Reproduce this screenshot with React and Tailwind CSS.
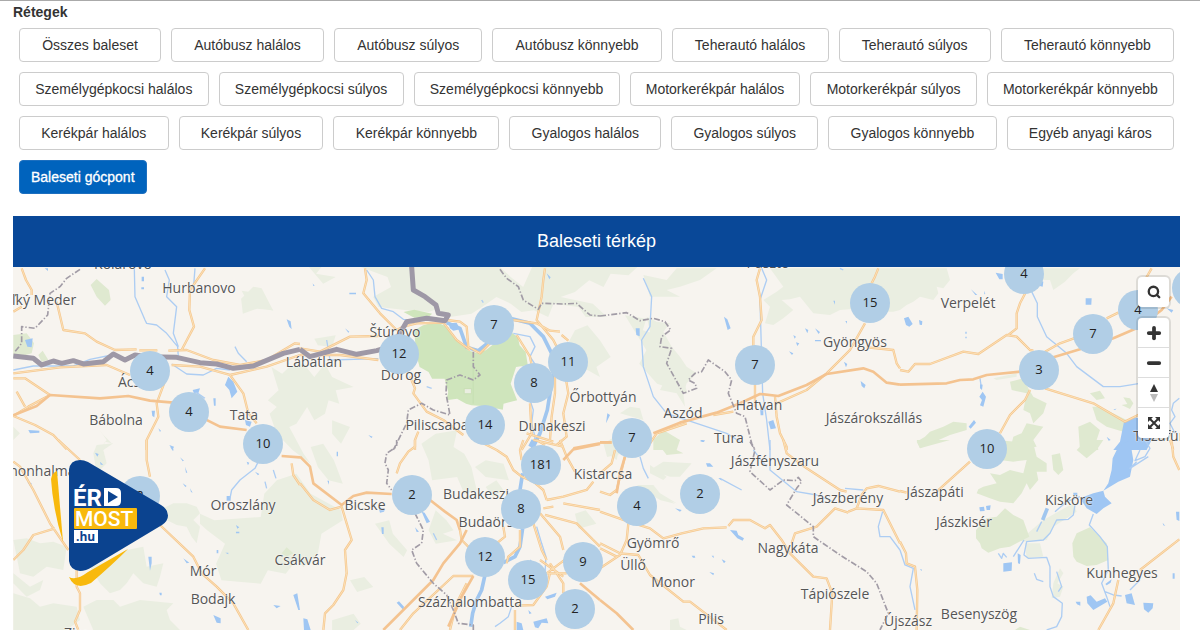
import { Minus, Plus, Search } from 'lucide-react';
import { useState } from 'react';

const layerRows = [
  ['Összes baleset', 'Autóbusz halálos', 'Autóbusz súlyos', 'Autóbusz könnyebb', 'Teherautó halálos', 'Teherautó súlyos', 'Teherautó könnyebb'],
  ['Személygépkocsi halálos', 'Személygépkocsi súlyos', 'Személygépkocsi könnyebb', 'Motorkerékpár halálos', 'Motorkerékpár súlyos', 'Motorkerékpár könnyebb'],
  ['Kerékpár halálos', 'Kerékpár súlyos', 'Kerékpár könnyebb', 'Gyalogos halálos', 'Gyalogos súlyos', 'Gyalogos könnyebb', 'Egyéb anyagi káros'],
];

// label, centre x, centre y on the map
const towns = [
  ['Kolárovo', 110, -3],
  ['Veľký Meder', 23, 33],
  ['Hurbanovo', 186, 21],
  ['Lábatlan', 301, 95],
  ['Štúrovo', 382, 65],
  ['Dorog', 388, 108],
  ['Ács', 116, 115],
  ['Bábolna', 103, 153],
  ['Tata', 231, 148],
  ['Piliscsaba', 424, 158],
  ['Dunakeszi', 539, 159],
  ['Őrbottyán', 590, 130],
  ['Aszód', 670, 146],
  ['Hatvan', 746, 138],
  ['Tura', 716, 171],
  ['Pásztó', 755, -4],
  ['Gyöngyös', 842, 75],
  ['Verpelét', 955, 36],
  ['Jászárokszállás', 861, 151],
  ['Jászfényszaru', 762, 194],
  ['Tiszafüred', 1154, 169],
  ['Kistarcsa', 590, 207],
  ['Pannonhalma', 17, 204],
  ['Oroszlány', 230, 238],
  ['Bicske', 352, 238],
  ['Budakeszi', 463, 227],
  ['Budaörs', 473, 255],
  ['Jászberény', 835, 231],
  ['Jászapáti', 922, 225],
  ['Jászkisér', 951, 255],
  ['Kisköre', 1056, 233],
  ['Csákvár', 287, 293],
  ['Mór', 190, 304],
  ['Bodajk', 200, 332],
  ['Zirc', 63, 366],
  ['Százhalombatta', 457, 335],
  ['Gyömrő', 640, 276],
  ['Üllő', 620, 298],
  ['Monor', 660, 315],
  ['Pilis', 698, 352],
  ['Nagykáta', 775, 281],
  ['Tápiószele', 822, 327],
  ['Újszász', 895, 354],
  ['Besenyszög', 966, 347],
  ['Kunhegyes', 1109, 306],
];

const clusters = [
  [4, 136, 103], [4, 175, 144], [10, 249, 176], [12, 385, 86], [7, 480, 57],
  [11, 554, 94], [8, 520, 115], [14, 471, 157], [181, 527, 197], [7, 618, 170],
  [7, 741, 97], [15, 856, 35], [4, 1010, 6], [3, 1025, 102], [7, 1079, 66],
  [4, 1124, 42], [6, 1178, 20], [10, 973, 181], [2, 126, 228], [2, 398, 227],
  [8, 507, 241], [4, 623, 238], [2, 686, 226], [12, 471, 289], [15, 514, 312],
  [9, 569, 294], [2, 561, 341],
];

// every tile is drawn at three times its size
const tiles = [
  {
    x: 0, y: 260,
    wood: 'M725 92L745 95L760 80L785 85L820 152L770 140L728 155L740 120ZM295 505L310 525L335 550L315 545L300 570L320 540ZM40 500L40 540L60 520Z',
    green: 'M272 75L290 57L310 75L327 90L332 120L315 137L290 110ZM40 225L80 220L102 250L95 280L60 290L40 290ZM115 285L128 272L145 300L125 305Z',
    lake: 'M675 375L685 350L700 365L712 395L695 415L688 390ZM578 390L600 385L595 400L582 400ZM735 480L755 485L750 500L738 495ZM455 452L465 452L463 472L457 468ZM85 510L118 512L118 518L90 520ZM425 50h7v14h-7ZM424 82h8v6h-8ZM640 415h7v22h-5ZM860 178L872 184L875 208L868 200ZM75 240L98 235L95 262L82 260ZM475 505L483 512L480 516ZM508 555L522 560L518 570ZM134 25h10v8Z',
    river: 'M403 25L405 110L435 180L440 190L470 195L500 220L533 260L535 290M495 30L508 60L500 110L530 140L520 220L535 260M585 25L580 90M40 330L100 318L220 318L270 298L335 285M515 312L560 342L610 345L650 325L690 330M705 260L715 280L740 305M555 410L590 398L615 415',
    danube: '',
    road: 'M65 25L78 60L95 90L95 105M40 155L65 140M170 125L190 210L255 220L290 245L345 270L410 268M418 271H472M615 25L570 90L568 150L582 200L545 270M505 272L560 270L640 300L720 315L800 300L885 250L900 252M40 340L180 322L320 315L390 345M515 315L600 320L690 345L800 320L900 285M690 345L730 400L745 460L770 490M40 355L75 355L150 405L85 440L40 468L105 495L160 525L200 568M50 395L75 440M500 350L470 430L475 470L440 540L440 570',
    highway: 'M40 466L110 438L150 405L300 415L385 408L450 422L520 428L600 470L660 500L740 510',
    border: 'M40 288L100 295L125 315L160 303L185 310L220 302L250 312L310 305L340 282L375 300L405 285L440 290L530 292L600 308L650 312L700 325L760 318L850 280L900 268',
    county: 'M240 28L200 55L180 80L150 100L143 165L105 205L65 200L65 250L45 275',
  },
  {
    x: 300, y: 260,
    wood: '',
    green: '',
    lake: 'M445 190L470 188L480 208L460 212L450 205ZM148 98h20v5h-20ZM135 205L148 215L145 218ZM205 525L218 530L214 534ZM38 70L44 78L40 78ZM740 40L752 52L748 58Z',
    river: 'M200 30L220 60L225 110L245 145L280 155L310 178L340 180M640 220L690 230L705 260L690 290L710 320M690 420L700 450L695 490L705 530L700 570M545 120L550 128M380 380L395 385M80 240L90 300L235 296',
    danube: 'M440 188L480 205L500 262L535 272L575 240M630 175L690 190L730 230L755 280L762 330L750 400L742 450L720 520L695 570',
    road: 'M195 25L200 60L190 100L240 160L290 210L310 200L350 190L430 188L470 240L510 270M440 180L480 185L500 200L505 260L540 280L575 245M735 25L730 60L725 110L710 180L760 240L790 300L800 370L805 400L790 460L800 530L770 555M640 180L710 190L750 212L780 215M785 225L805 242M650 225L690 290L700 340M690 430L695 520L665 570M765 340L765 400L755 470L750 540M0 265L60 275L150 230L235 228M0 285L120 285L235 300M330 350L345 385L340 400L380 455L430 480L490 525M355 515L345 540L345 570M550 550L590 570M680 520L760 545M700 540L790 560',
    highway: 'M820 565L900 550',
    border: 'M335 20L340 90L375 110L408 135L415 160L445 165L435 182L380 175L320 185L300 220L270 260L230 272L170 283L110 268L30 290L0 268',
    county: 'M600 28L620 55L655 80L670 120L715 148L725 130L790 132L830 130L870 165L900 168M520 275L520 320L540 345L520 360L480 345L440 360L438 400L450 465L400 450L365 430L325 450L320 490L290 550L280 570',
  },
  {
    x: 600, y: 260,
    wood: 'M130 45L200 60L230 25H350L300 60L240 80L200 90L240 110L150 110ZM510 25H900V150L880 155L850 155L825 140L800 130L785 145L720 150L690 165L640 160L600 110L570 118L545 120L580 150L550 175L520 195L495 190L510 140L490 120L530 95L550 80ZM140 170L170 185L210 190L190 215L215 260L240 290L260 320L290 340L260 370L250 400L255 440L230 400L180 390L195 360L200 330L150 310L170 250L130 240L150 215ZM60 460L90 440L120 445L130 480Z',
    green: 'M160 540L190 510L240 540L200 570H160Z',
    lake: 'M372 170L382 178L392 205L383 210ZM107 205h12v24l-10 -4ZM505 485L520 480L528 505L512 508ZM480 440h10v26h-8ZM782 363L797 375L793 385L785 378ZM615 205L625 210L622 220ZM645 205L660 216L656 222ZM645 240h18v4h-18ZM580 225L588 230L584 236ZM588 247L598 250L592 258ZM567 274L580 280L576 285ZM732 305L742 312L738 322ZM736 183h5v8ZM700 122h5v12ZM300 545L315 540L312 546ZM22 460L30 465L18 490Z',
    river: 'M130 55L155 110L150 200L125 240L130 320L160 410L200 460L290 490L380 520L420 545M485 25L500 60L480 120L488 400L500 480L510 570M720 25L730 30',
    danube: '',
    road: 'M480 25L470 60L480 110L485 180L460 230V260M465 370V440M835 25L825 50L815 70M795 190L750 270L680 340L620 390L530 430M800 262L880 270L890 310L900 325M525 410L530 470L540 520L560 560V570M0 548H35M150 550L170 520L260 490M340 465L400 455',
    highway: 'M0 547L35 547M160 520L240 488L350 458L420 430L480 402L535 408L620 375L680 342L790 325L820 335L860 368L900 374',
    border: '',
    county: 'M0 168L80 158L120 182L160 175L195 185L212 210L185 230L180 260L215 265L200 310L250 400L290 385L285 370L265 360L285 340L305 335L325 300L375 335L395 360L385 400L410 460L435 470L455 550L465 570',
  },
  {
    x: 900, y: 260,
    wood: 'M0 25H140L150 60L130 85L110 80L115 100L100 120L60 110L40 125L20 135L0 150ZM430 25H540L520 40L495 65L460 90L450 60L430 60ZM280 355L350 340L350 350L290 360Z',
    green: 'M330 365L370 355L385 385L400 410L440 430L430 460L400 490L390 460L370 450L380 400L335 390ZM50 545L75 530L90 515L130 500L160 485L200 490L200 510L150 525L60 565ZM570 400L600 392L615 415L590 420ZM577 440L600 440L680 480L670 515L620 500L590 480ZM670 412L690 415L700 430L690 447L665 435L682 432ZM535 500L570 485L600 510L590 540L595 570H540ZM340 530L365 520L380 490L430 500L400 540L410 560L330 570Z',
    lake: 'M557 115L575 115L574 134L557 134ZM287 38L308 42L308 58L298 58ZM12 175L25 170L38 192L28 200L18 195ZM57 180L67 184L66 195L59 194ZM213 88L232 105L226 105ZM252 92L256 102L253 103ZM196 215h4v6h-4ZM196 230h4v5h-4ZM240 372L248 374L246 390L240 385ZM238 410L248 395L258 410L250 440L240 436L246 420ZM672 485L700 470L725 478L735 520L760 530L740 570H640L660 545ZM206 500L222 480L228 488L212 506ZM640 448L650 446L645 450ZM418 60L430 65L428 80L420 78ZM620 530L632 540L626 542ZM800 145L820 150L815 158Z',
    river: 'M395 95L412 130L412 170L440 230L500 280L530 320L570 350L610 380L660 380L720 370M838 415L820 430L815 450L825 470L810 490L825 520M240 355L243 375',
    danube: '',
    road: 'M378 95L360 130L350 160L350 205L325 225M0 330L25 335L45 312L90 312L190 275L235 282L320 225L350 230L390 270L400 272M435 275L480 250L530 232M620 175L655 158M755 25L735 60M390 390L375 420L330 465L300 520M435 385L580 430L675 485L725 460M810 540L820 570',
    highway: 'M0 374L140 370L180 360L220 358L260 345L360 335M460 292L540 268L640 235L720 200L785 150L815 110',
    border: '',
    county: '',
  },
  {
    x: 0, y: 440,
    wood: 'M290 15L340 10L310 30L320 70L290 100L280 40ZM480 210L520 190L560 190L590 200L600 220L580 240L600 260L590 310L575 290L560 260L530 255L500 240ZM40 300L80 295L120 310L160 305L200 320L190 390L140 380L100 410L60 400ZM270 380L340 360L380 330L430 320L440 380L490 370L480 410L470 440L430 430L400 400L380 430L360 450L330 460L300 430ZM40 460L90 475L120 500L160 490L230 500L240 540L200 570H40ZM250 500L290 480L340 480L360 500L420 480L520 490L500 510L510 540L540 570H280ZM40 400L90 440L130 420L120 450L80 470L40 430Z',
    green: 'M845 340L860 322L880 340L860 350Z',
    lake: 'M680 168h12v14h-12ZM640 525L662 535L662 550L650 548ZM880 465L892 460L900 510L895 510ZM285 38L296 42L292 50ZM300 65L310 74L302 74ZM82 125L95 130L92 142ZM510 20L522 30L518 32ZM540 52L552 62L548 64ZM555 80L562 98L558 98ZM548 130L560 138L556 141ZM570 145L578 158L573 156ZM740 65L748 68L744 76ZM765 95L778 102L774 106ZM708 255L718 262L712 266ZM708 275h10v5h-10ZM820 495L842 498L830 505ZM550 355L568 368L560 370ZM478 458h7v8h-5ZM650 330h5v10h-5ZM676 338h9v5ZM445 350L455 350L455 370L450 392Z',
    river: 'M775 65L765 85L720 120L695 150L690 175M795 125L800 145M820 90L828 115',
    danube: '',
    road: 'M40 65L60 80L100 150L150 250L205 330M165 265L100 285L70 330L40 360M175 0L240 60M440 0L440 60L450 110M480 255L580 350L605 400L650 440L700 490L745 570M230 390V440L240 460L240 510L225 545L235 570M875 70L880 105L900 135',
    highway: 'M845 48L900 52',
    border: '',
    county: '',
  },
  {
    x: 300, y: 440,
    wood: '',
    green: '',
    lake: 'M365 215L374 218L390 245L380 250ZM290 488L297 484L312 500L310 510ZM10 535L22 538L32 570H12ZM244 262h7v20h-5ZM345 262L357 275L350 276ZM700 545L740 535L745 550L725 548L715 565L705 562ZM650 545L665 550L670 570H650ZM735 470L770 458L765 470L742 478ZM235 200L255 208L252 215L240 218ZM110 35h4v14h-4ZM82 122h5v12ZM685 510L695 520L688 522ZM165 540L175 548L172 550Z',
    river: 'M710 260L725 310L738 350L735 400M635 500L625 530L600 550L585 560M400 280L410 300M690 360L700 370',
    danube: 'M700 0L690 20M668 100L660 150M668 265L660 320L645 350L610 368M555 405L545 450L530 480L518 520L512 560',
    road: 'M345 0L345 20L325 35L300 70L290 100M0 130L40 180L90 210L125 200M125 200L140 250L155 300L135 330L140 400L130 450L100 495L75 520L70 570M590 30L620 50L640 90L665 110M665 110L700 125L730 150L740 180M740 180L790 170L860 150L880 125M730 205L760 200M790 190L900 210M720 220L780 290L790 330M735 225L830 250L880 300L900 320M700 250L725 330L740 360M670 0L660 30L665 60M710 0L735 15M780 0L800 50L825 95M610 260L615 290L590 310M480 270L485 300L510 325M740 400L800 400M750 370L790 430L790 460M720 360L790 410M750 400L740 440L700 495L650 497M645 510L645 570M300 570L340 520L460 408L520 408M450 570L470 490L500 430M620 370L625 350L660 320L660 270M800 355L740 400',
    highway: 'M0 50L30 80L40 130L125 195L160 168L200 158L275 162M390 180L435 215L470 240L480 270M250 570L400 420L430 370L480 310L500 270M445 560L485 470L520 408M840 430L900 480M790 60L820 28L860 20L900 12',
    border: '',
    county: 'M290 0V20L260 40L255 70L265 90L260 130L275 150M345 220L370 270L365 310L335 330L350 370L400 430L440 465L460 510L475 550L520 555V570',
  },
  {
    x: 600, y: 440,
    wood: 'M150 90L190 65L275 70L240 110L210 110ZM110 135L160 135L180 160L230 190L170 170ZM20 20L60 15L50 60L20 40ZM210 540L235 535L240 560L260 570H210ZM150 75L200 110L190 120L150 100Z',
    green: 'M165 0H240L230 30L250 40L200 45Z',
    lake: 'M390 270L410 272L415 285L432 295L428 302L412 295ZM318 70L330 70L340 80L322 80ZM225 205L245 210L240 215ZM275 347h9l2 6h-7ZM335 347h6v8ZM365 358L377 364L372 370ZM328 396L342 400L340 406ZM300 0h12l-4 6ZM355 115L362 114L366 122Z',
    river: 'M120 50L130 85L145 115M360 115L425 150M510 0V90L590 155L650 165L700 185M460 30L500 80M848 215L835 260L840 290L870 290L900 330M735 145L790 150',
    danube: '',
    road: 'M45 30L35 70L0 100M75 50L50 150L30 165L0 155M0 215L85 245L150 265L190 295L245 280L310 265L380 262M385 258L400 240L450 240L495 265L510 255L545 300L570 340L640 410L680 415L697 460L690 570M85 250L80 300L60 345L0 385M0 310L60 340L115 345L150 405L250 485L270 485L380 570M0 325L50 350M550 0L560 40L620 85L720 150L740 155M745 215L770 205L785 165L800 145L835 138L900 155M575 310L585 280L650 260L705 205L745 218M770 205L850 210L900 310',
    highway: 'M0 480L50 520L100 570M75 50L60 100L50 160',
    border: '',
    county: 'M450 5L465 30L450 95L510 150L550 120L585 122L595 112L605 125L590 145L560 195L640 260L640 290L720 345L800 395L830 430L865 520L840 570',
  },
  {
    x: 900, y: 440,
    wood: 'M360 300L430 240L520 190L530 215L500 235L460 260L440 300L375 305ZM375 310L420 310L430 350L380 355ZM460 430L480 385L490 400L472 430L490 440L480 470L455 475Z',
    green: 'M50 0H150L60 25ZM290 0L400 10L410 50L440 70L440 95L410 95L415 120L390 150L380 130L365 160L340 190L300 185L270 175L230 160L235 148L250 140L290 130L270 100L300 105L330 90L370 100L380 60L340 65L300 60ZM455 45L480 40L490 90L475 105L460 90ZM530 30L560 0H610L590 30L560 55ZM228 270L260 235L290 230L315 205L340 225L370 240L388 290L330 320L300 325L265 338L245 325L240 310L228 295ZM517 310L530 280L570 262L620 310L625 360L590 375L560 378L530 365L520 350ZM345 570L360 560L390 570Z',
    lake: 'M638 55L655 20L690 0H735L715 25L695 30L700 60L690 110L655 125L610 152L625 130L635 90ZM540 175L580 160L610 152L615 170L635 190L610 205L590 222L560 205ZM310 370L336 367L335 392L310 395ZM353 340L362 345L360 372L354 370ZM238 202L252 200L254 213L240 214ZM258 198L272 196L270 210L260 210ZM675 465L695 460L705 495L680 490ZM730 488L760 490L758 505L745 518L732 508ZM560 470L572 466L590 485L615 475L622 485L580 510L562 490ZM527 485h14v12l-10 -4ZM828 215h10v28l-8 -4ZM616 432L635 418L632 428L620 436ZM788 248L796 258L790 256ZM818 400h6v16h-6ZM520 158h12v8h-12ZM60 388h5v6Z',
    river: 'M525 195L520 225L505 238L470 240L450 280L430 300L380 305L372 345L385 355L440 352L450 380L450 440L460 470L487 490L485 530L470 560L440 570M580 222L568 255L600 290L622 320L625 390L605 430L620 470L630 500M340 350L372 300M615 455L640 465L665 468M690 450L720 420M735 0L750 25L735 50L705 62L720 30M710 65L690 85L745 50M0 330L15 375L40 385L30 440L45 510M403 400L410 418L430 425M470 395L485 440L475 455M295 340L305 355L310 340L320 352M410 275L425 245M540 170L500 185L465 215',
    danube: 'M428 240L442 205',
    road: 'M210 65L110 155M0 153L20 158M0 305L18 340L20 370L45 380L52 450L50 570M815 0L820 50L838 90M655 420L640 490L595 570M838 298L720 390',
    highway: '',
    border: '',
    county: '',
  },
];

// the hills round the Danube bend run over several tiles
const hills =
  'M450 0H840L870 30L905 60L930 0H1225L1200 25L1150 20L1130 60L1090 40L1050 75L1010 90L1100 110L1140 150L1080 150L1060 120L990 110L975 150L935 130L900 135L870 110L830 90L790 120L760 140L700 150L665 125L640 135L580 130L500 120L485 90L535 60L525 30Z' +
  'M640 0H690L680 40L720 60L700 90L650 80ZM930 0H960L990 60L1020 50L1000 80L950 70Z' +
  'M1050 190L1085 175L1120 220L1150 270L1110 300L1120 330L1070 300L1030 230Z' +
  'M1190 145L1250 155L1240 190L1270 200L1290 270L1350 320L1365 380L1280 350L1230 290L1250 250Z' +
  'M305 0H340L325 20L380 30L345 50ZM115 95L150 60L170 85L205 130L160 125L120 140Z' +
  'M200 300L230 320L250 300L290 290L320 330L350 290L370 330L430 360L380 370L390 410L360 400L350 440L320 460L300 420L270 470L250 480L290 560L310 590L260 550L215 500L195 440L215 420L190 400L220 370Z' +
  'M320 215L380 205L370 240L330 235ZM310 540L345 530L375 580L400 650L360 640L330 600Z' +
  'M370 460L420 480L395 530L370 500ZM240 400L260 380L280 430L260 460Z' +
  'M180 680L215 640L270 620L310 680L395 730L400 760L340 800L330 860L290 900L270 880L240 920L190 910L170 950L60 940L45 890L70 830L20 790L0 770V740L40 760L170 750Z' +
  'M620 530L660 500L720 490L710 540L740 560L760 600L775 670L740 680L720 630L650 640L640 580Z' +
  'M770 600L800 580L850 590L865 640L800 630ZM800 660L830 640L850 670L820 690Z' +
  'M660 730L690 760L710 790L680 800L720 820L660 830L640 790Z' +
  'M490 770L530 760L540 800L580 850L570 870L530 830ZM420 940L460 930L485 960L440 975ZM370 1060L430 1040L450 1070L430 1089H370Z' +
  'M1050 740L1080 730L1110 770L1060 785ZM1130 530L1160 510L1180 560L1140 570ZM1240 670L1300 690L1330 710L1290 700Z';

const park =
  'M600 190L625 175L660 165L695 180L720 220L750 250L775 258L800 250L830 225L870 195L890 210L895 235L912 255L918 295L885 300L870 350L888 400L850 410L848 428L800 418L760 415L745 410L720 395L690 400L695 375L685 335L650 335L640 315L615 300L605 260ZM570 135L600 128L650 140L640 150L600 152Z';

const layers = [
  ['wood', 'fill-[#eaeee1]'],
  ['green', 'fill-[#dfe9d0]'],
  ['lake', 'fill-[#9fc6f3]'],
  ['river', 'fill-none stroke-[#adcdf3] [stroke-width:4]'],
  ['danube', 'fill-none stroke-[#a0c6ef] [stroke-width:11]'],
  ['road', 'fill-none stroke-[#f5c78e] [stroke-width:7]'],
  ['road', 'fill-none stroke-[#fbe0b8] [stroke-width:3]'],
  ['highway', 'fill-none stroke-[#f4c390] [stroke-width:8]'],
  ['border', 'fill-none stroke-[#9e98a6] [stroke-width:15]'],
  ['county', 'fill-none stroke-[#a29ca6] [stroke-width:5] [stroke-dasharray:18_6_4_6]'],
];

const MapBackground = () => (
  <svg className="absolute left-0 top-0 h-[363px] w-[1167px]" viewBox="13 267 1167 363" aria-hidden="true">
    <g transform="translate(200 267) scale(0.3571 0.3333)">
      <path d={hills} className="fill-[#eaeee1]" />
      <path d={park} className="fill-[#cfe5bc]" />
      <path d="M765 410V270M740 365h20v15h-20Z" className="fill-[#eaeee1] stroke-[#c3dcae] [stroke-width:2]" />
    </g>
    {layers.map(([name, className], i) => (
      <g key={i} className={className} strokeLinejoin="round">
        {tiles.map((tile) => (
          <path key={`${tile.x}-${tile.y}`} d={tile[name]} transform={`translate(${tile.x} ${tile.y}) scale(0.3333)`} />
        ))}
      </g>
    ))}
  </svg>
);

const Logo = () => (
  <svg className="absolute left-[36px] top-[188px] h-[136px] w-[122px]" viewBox="49 455 122 136" role="img" aria-label="ÉRD MOST.hu">
    <path d="M51 479Q52 473 57 471L63 542Q53 510 51 479Z" fill="#f8b90d" />
    <path d="M69 577Q76 581 88 572L128 549Q112 565 91 583Q75 591 69 577Z" fill="#f8b90d" />
    <path d="M69 470Q70 460 80 460Q84 460 88 462L161 505Q168 509 168 515.5Q168 521 162 525L92 567Q86 571 80 571Q70 570 69 561Z" fill="#0b438f" />
    <text x="73" y="506" className="fill-white font-[Roboto] text-[24px] font-bold">ÉR</text>
    <path d="M104 488H116Q121 488 121 493V501Q121 506 116 506H104Z" fill="#fff" />
    <path d="M108 491V503L118 497Z" fill="#0b438f" />
    <rect x="74" y="508" width="63" height="21" rx="1" fill="#f8b90d" />
    <text x="75" y="526" className="fill-white font-[Roboto] text-[21px] font-medium">MOST</text>
    <rect x="74" y="530" width="24" height="13" fill="#fff" />
    <text x="76" y="541" className="fill-[#0b438f] font-['Open_Sans'] text-[12px] font-bold">.hu</text>
  </svg>
);

const controlClass = 'flex h-[30px] w-[31px] items-center justify-center text-[#333]';

const MapControls = () => (
  <div className="absolute right-[11px] top-[10px] flex flex-col gap-[11px]">
    <div className="rounded-sm bg-white shadow-[0_0_0_2px_rgba(0,0,0,0.1)]">
      <button type="button" aria-label="Keresés" className={controlClass}>
        <Search className="h-[14px] w-[14px]" strokeWidth={4} />
      </button>
    </div>
    <div className="divide-y divide-[#ddd] rounded-sm bg-white shadow-[0_0_0_2px_rgba(0,0,0,0.1)]">
      <button type="button" aria-label="Nagyítás" className={controlClass}>
        <Plus className="h-[18px] w-[18px]" strokeWidth={5} />
      </button>
      <button type="button" aria-label="Kicsinyítés" className={controlClass}>
        <Minus className="h-[18px] w-[18px]" strokeWidth={5} />
      </button>
      <button type="button" aria-label="Északra forgatás" className={controlClass}>
        <svg className="h-5 w-5" viewBox="0 0 20 20">
          <path d="M6 9L10 1L14 9Z" fill="#333" />
          <path d="M6 11H14L10 19Z" fill="#bbb" />
        </svg>
      </button>
      <button type="button" aria-label="Teljes képernyő" className={controlClass}>
        <svg className="h-3 w-3" viewBox="0 0 12 12" fill="#333">
          <path d="M0 0H5L0 5ZM12 0V5L7 0ZM0 12V7L5 12ZM12 12H7L12 7Z" />
          <path d="M2 2L10 10M10 2L2 10" stroke="#333" strokeWidth="2" />
        </svg>
      </button>
    </div>
  </div>
);

const AccidentMap = () => (
  <div className="relative h-[363px] overflow-hidden bg-[#f7f4ef] font-['Open_Sans',sans-serif]">
    <MapBackground />
    {towns.map(([name, x, y]) => (
      <span
        key={name}
        className="absolute -translate-x-1/2 -translate-y-1/2 whitespace-nowrap text-[14px] leading-5 text-[#555] [text-shadow:0_0_2px_#fff,0_0_1px_#fff]"
        style={{ left: x, top: y }}
      >
        {name}
      </span>
    ))}
    {clusters.map(([count, x, y]) => (
      <button
        key={`${x}-${y}`}
        type="button"
        className="absolute flex h-10 w-10 -translate-x-1/2 -translate-y-1/2 items-center justify-center rounded-full bg-[#b1cee6] text-[13px] text-[#222]"
        style={{ left: x + 1, top: y + 1 }}
      >
        {count}
      </button>
    ))}
    <MapControls />
    <Logo />
  </div>
);

const App = () => {
  const [active, setActive] = useState('Baleseti gócpont');

  const layerClass = (name) =>
    name === active
      ? 'border-[#1d6fbf] bg-[#0063bd] text-white'
      : 'border-[#ccc] bg-white text-[#333]';

  return (
    <div className="overflow-hidden border-t border-[#aaa] bg-white pl-[13px] pr-5 font-['Liberation_Sans',sans-serif] text-[14px]">
      <h3 className="pt-px text-[14px] font-bold leading-5 text-[#333]">Rétegek</h3>
      <div className="flex flex-col gap-[10px] px-1.5 pb-[22px] pt-1.5">
        {layerRows.map((row, i) => (
          <div key={i} className="flex gap-[10px]">
            {row.map((name) => (
              <button
                key={name}
                type="button"
                onClick={() => setActive(name)}
                className={`h-[34px] flex-auto whitespace-nowrap rounded border px-[10px] ${layerClass(name)}`}
              >
                {name}
              </button>
            ))}
          </div>
        ))}
        <div className="flex">
          <button
            type="button"
            onClick={() => setActive('Baleseti gócpont')}
            className={`h-[34px] whitespace-nowrap rounded border px-[11px] [-webkit-text-stroke:0.3px] ${layerClass('Baleseti gócpont')}`}
          >
            Baleseti gócpont
          </button>
        </div>
      </div>
      <h2 className="bg-[#094898] py-3 text-center text-[18px] leading-[27px] text-white">Baleseti térkép</h2>
      <AccidentMap />
    </div>
  );
};

export default App;
